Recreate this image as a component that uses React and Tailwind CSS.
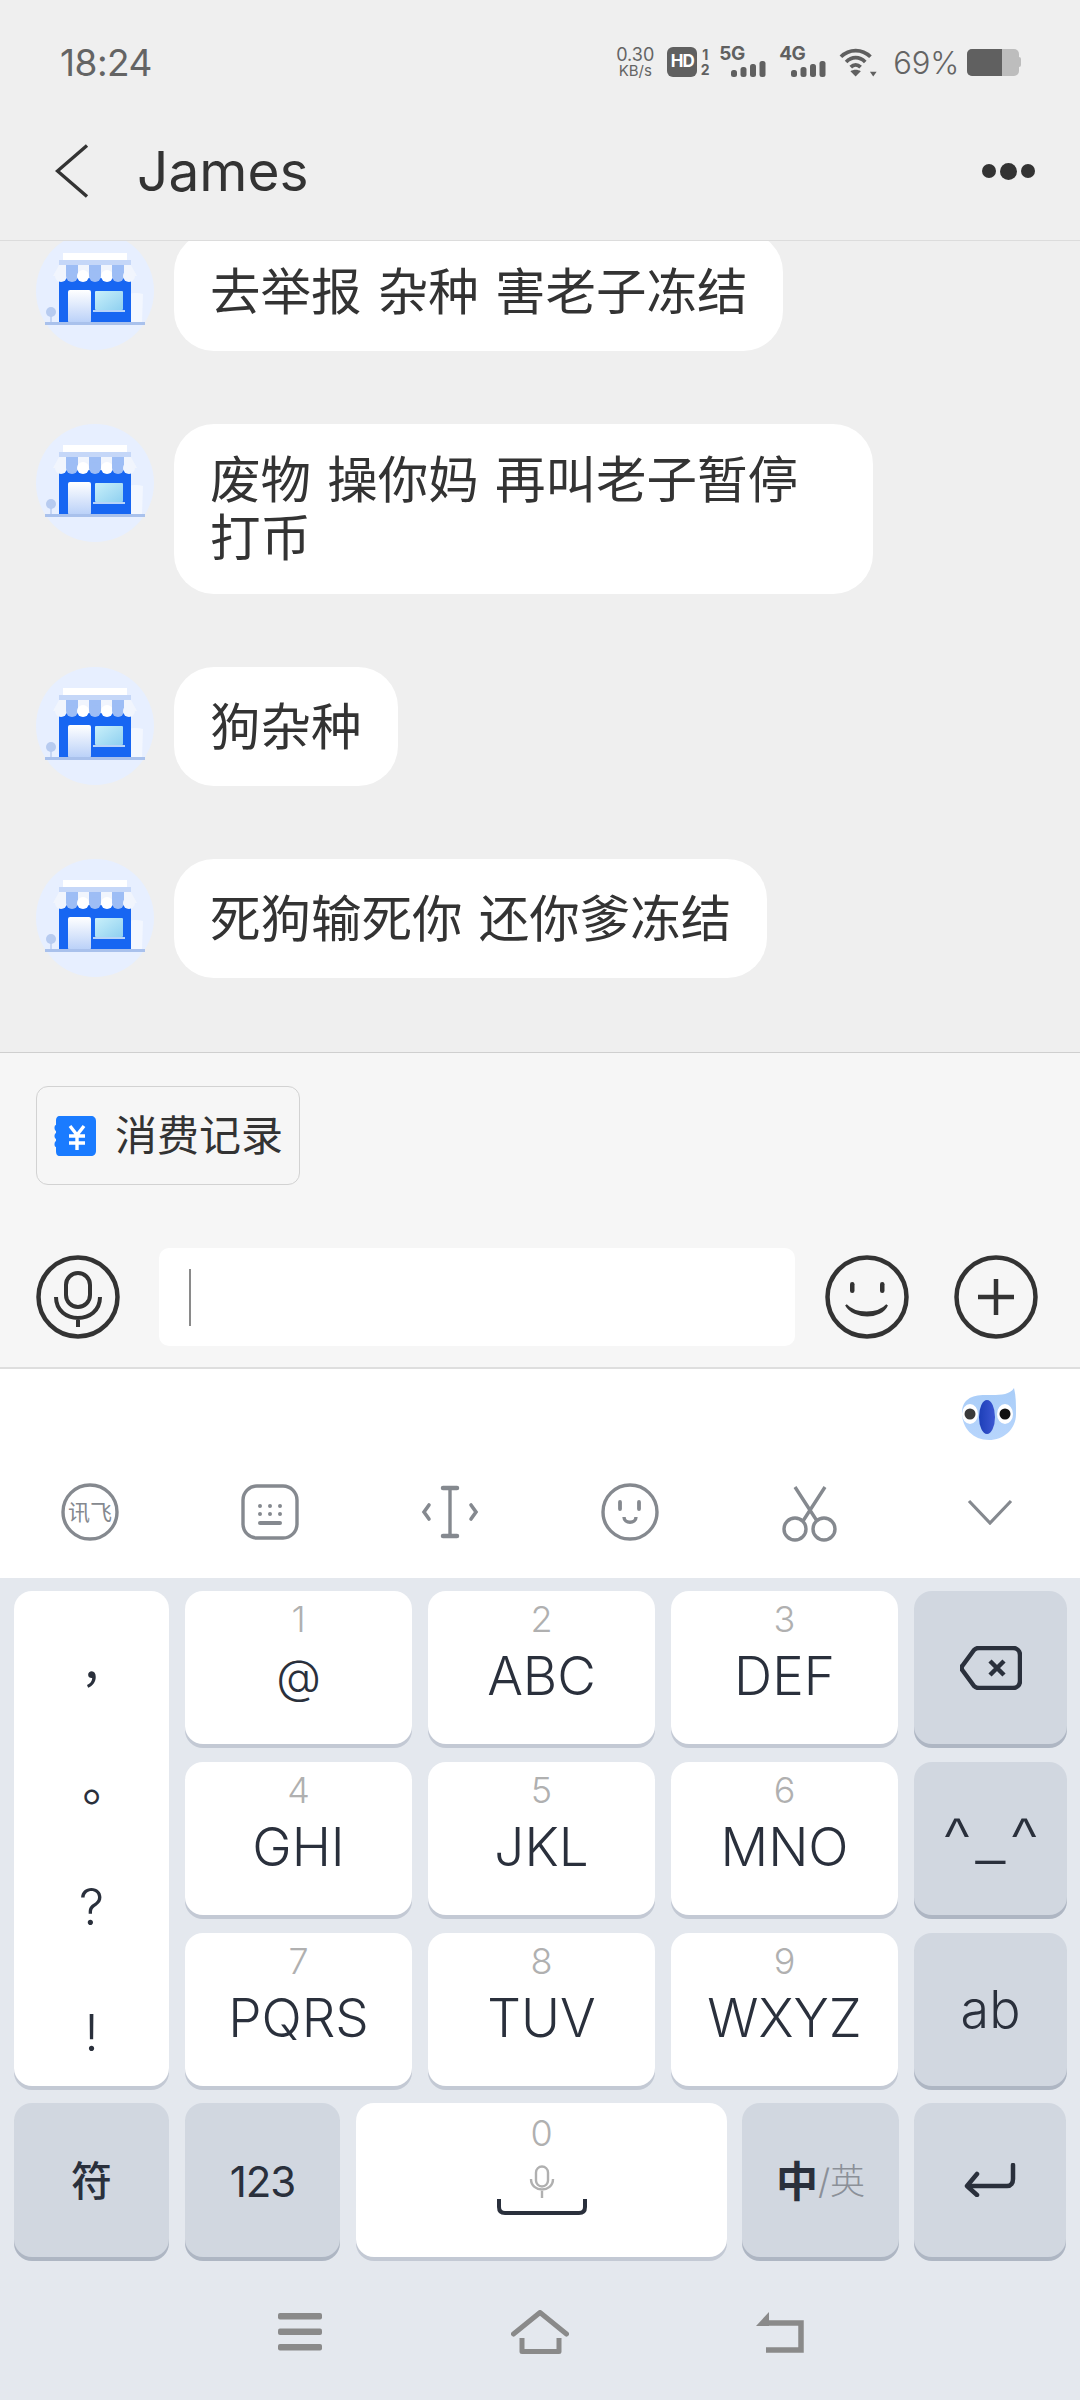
const cjk = `font-['Inter','Noto_Sans_CJK_SC',sans-serif]`;

function Bars() {
  return (
    <svg width="35" height="16" viewBox="0 0 35 16" fill="#606060">
      <rect x="0" y="9" width="6" height="7" rx="2.5" />
      <rect x="9.5" y="6" width="6" height="10" rx="2.5" />
      <rect x="19" y="3" width="6" height="13" rx="2.5" />
      <rect x="28.5" y="0" width="6" height="16" rx="2.5" />
    </svg>
  );
}

function Network({ label }) {
  return (
    <div className="relative w-[47px] h-[30px]">
      <span className="absolute left-0 top-[-3px] text-[19px] leading-[20px] font-bold text-[#606060] tracking-[-0.5px]">
        {label}
      </span>
      <div className="absolute left-[12px] bottom-0">
        <Bars />
      </div>
    </div>
  );
}

function StatusBar() {
  return (
    <div className="h-[102px] pt-[22px] pl-[60px] pr-[59px] flex items-center justify-between text-[#646464]">
      <span className="text-[37px] leading-none tracking-[-0.5px]">18:24</span>
      <div className="flex items-center">
        <div className="w-[38px] flex flex-col items-center leading-none">
          <span className="text-[18px] leading-[18px]">0.30</span>
          <span className="text-[15px] leading-[14px]">KB/s</span>
        </div>
        <div className="ml-[13px] w-[30px] h-[30px] rounded-[6px] bg-[#606060] flex items-center justify-center text-white text-[17px] font-bold tracking-[-1px]">
          HD
        </div>
        <div className="ml-[2px] w-[12px] flex flex-col items-center text-[#606060] text-[14px] font-bold leading-[15px]">
          <span>1</span>
          <span>2</span>
        </div>
        <div className="ml-[8px]">
          <Network label="5G" />
        </div>
        <div className="ml-[13px]">
          <Network label="4G" />
        </div>
        <svg className="ml-[13px]" width="38" height="29" viewBox="0 0 36 28" fill="none" stroke="#606060" strokeWidth="3.6">
          <path d="M1.5 8.5C9.5 0.5 22 0.5 30 8.5" />
          <path d="M6.5 13.5C12 8 19.5 8 25 13.5" />
          <path d="M11 18.5C14 15.5 17.5 15.5 20.5 18.5" />
          <path d="M15.7 27.5L10.7 22.5C13.5 20.5 18 20.5 20.7 22.5Z" fill="#606060" stroke="none" />
          <path d="M29.5 23H36L32.7 27.5Z" fill="#606060" stroke="none" />
        </svg>
        <span className="ml-[16px] text-[31px] leading-none font-light tracking-[-0.2px]">69%</span>
        <div className="ml-[8px] flex items-center">
          <div className="w-[52px] h-[27px] rounded-[5px] bg-[#bdbdbd] overflow-hidden">
            <div className="w-[35px] h-full bg-[#606060]" />
          </div>
          <div className="w-[2px] h-[10px] rounded-r-[2px] bg-[#bdbdbd]" />
        </div>
      </div>
    </div>
  );
}

function Header() {
  return (
    <div className="h-[139px] border-b border-[#dcdcdc] flex items-center pl-[55px] pr-[45px]">
      <svg width="34" height="54" viewBox="0 0 34 54" fill="none" stroke="#333333" strokeWidth="3.4">
        <path d="M32 1.5L2.5 27L32 52.5" />
      </svg>
      <span className="ml-[48px] text-[55px] leading-none text-[#333333] flex-1">James</span>
      <div className="flex items-center gap-[4px]">
        <div className="w-[14px] h-[14px] rounded-full bg-[#333333]" />
        <div className="w-[17px] h-[17px] rounded-full bg-[#333333]" />
        <div className="w-[14px] h-[14px] rounded-full bg-[#333333]" />
      </div>
    </div>
  );
}

function ShopAvatar({ id }) {
  return (
    <svg className="shrink-0" width="118" height="118" viewBox="0 0 118 118">
      <defs>
        <linearGradient id={`${id}d`} x1="0" y1="0" x2="0" y2="1">
          <stop offset="0" stopColor="#ffffff" />
          <stop offset="1" stopColor="#b9d0f8" />
        </linearGradient>
        <linearGradient id={`${id}w`} x1="0" y1="0" x2="1" y2="1">
          <stop offset="0" stopColor="#c9f0fa" />
          <stop offset="1" stopColor="#8fd0f0" />
        </linearGradient>
      </defs>
      <circle cx="59" cy="59" r="59" fill="#e7efff" />
      <path d="M85 90V68C92 60 100 60 107 62L106 90Z" fill="#f3f7ff" />
      <rect x="27" y="21" width="64" height="7" fill="#ffffff" />
      <rect x="23" y="28" width="72" height="5" fill="#c5d7f8" />
      <rect x="23" y="46" width="72" height="45" fill="#1766f2" />
      <rect x="32" y="58" width="23" height="33" rx="2" fill={`url(#${id}d)`} />
      <rect x="59" y="59" width="28" height="19" rx="1" fill={`url(#${id}w)`} />
      <rect x="57" y="78" width="32" height="2" fill="#b7d4f8" />
      <path d="M17 44L23 33H95L101 44Z" fill="#f1f5fd" />
      <circle cx="25" cy="44" r="6" fill="#f1f5fd" />
      <path d="M30 33H42V44H30Z" fill="#9dbdf5" />
      <circle cx="36" cy="44" r="6" fill="#9dbdf5" />
      <circle cx="47" cy="44" r="6" fill="#ffffff" />
      <path d="M53 33H65V44H53Z" fill="#9dbdf5" />
      <circle cx="59" cy="44" r="6" fill="#9dbdf5" />
      <circle cx="71" cy="44" r="6" fill="#ffffff" />
      <path d="M76 33H88V44H76Z" fill="#9dbdf5" />
      <circle cx="82" cy="44" r="6" fill="#9dbdf5" />
      <circle cx="93" cy="44" r="6" fill="#f1f5fd" />
      <circle cx="15" cy="80" r="5" fill="#b7cbf0" />
      <rect x="14.3" y="82" width="1.4" height="9" fill="#b7cbf0" />
      <rect x="9" y="90" width="100" height="3" fill="#a9c1ec" />
    </svg>
  );
}

function Message({ id, text }) {
  return (
    <div className="flex items-start pl-[36px] shrink-0">
      <ShopAvatar id={id} />
      <div className="ml-[20px] max-w-[699px] min-h-[119px] py-[27px] px-[36px] flex items-center bg-white rounded-[40px] text-[#333333] text-[50.5px] leading-[58px] [word-spacing:2px]">
        <span>{text}</span>
      </div>
    </div>
  );
}

function ChatList() {
  return (
    <div className="h-[811px] overflow-hidden">
      <div className="-mt-[9px] flex flex-col gap-[73px]">
        <Message id="a" text="去举报 杂种 害老子冻结" />
        <Message id="b" text="废物 操你妈 再叫老子暂停打币" />
        <Message id="c" text="狗杂种" />
        <Message id="e" text="死狗输死你 还你爹冻结" />
      </div>
    </div>
  );
}

function CircleIcon({ children }) {
  return (
    <svg className="shrink-0" width="84" height="84" viewBox="0 0 84 84" fill="none" stroke="#333333" strokeWidth="4.5">
      <circle cx="42" cy="42" r="39.5" />
      {children}
    </svg>
  );
}

function InputPanel() {
  return (
    <div className="h-[317px] border-t border-t-[#cfcfcf] border-b-2 border-b-[#dedede] bg-[#f6f6f6] pt-[33px] px-[36px] flex flex-col">
      <div className="w-[264px] h-[99px] rounded-[12px] border border-[#d2d2d2] flex items-center pl-[17px]">
        <svg width="42" height="40" viewBox="0 0 42 40">
          <path d="M6 0H37C40 0 42 2 42 5V35C42 38 40 40 37 40H6C3 40 2 38 2 35V31C0 31 0 26 2 25V23C0 22 0 18 2 17V15C0 14 0 9 2 9V5C2 2 3 0 6 0Z" fill="#1a7bff" />
          <path d="M16 10L23 19L30 10M15 20H31M15 27H31M23 19V34" fill="none" stroke="#ffffff" strokeWidth="3.4" />
        </svg>
        <span className="ml-[19px] text-[42px] leading-none text-[#333333]">消费记录</span>
      </div>
      <div className="mt-[63px] flex items-center">
        <CircleIcon>
          <rect x="30" y="18" width="24" height="34" rx="12" strokeWidth="4" />
          <path d="M20 42C20 70 64 70 64 42M42 62V72" strokeWidth="4" />
        </CircleIcon>
        <div className="ml-[39px] w-[636px] h-[98px] rounded-[10px] bg-white pl-[30px] flex items-center">
          <div className="w-[2px] h-[57px] bg-[#8a8a8a]" />
        </div>
        <div className="ml-[30px]">
          <CircleIcon>
            <rect x="25" y="27" width="4.5" height="11" rx="2.2" fill="#333333" stroke="none" />
            <rect x="55" y="27" width="4.5" height="11" rx="2.2" fill="#333333" stroke="none" />
            <path d="M21 50C30 60 53 60 62 50C56 64 29 64 21 50Z" fill="#333333" strokeWidth="2" />
          </CircleIcon>
        </div>
        <div className="ml-[45px]">
          <CircleIcon>
            <path d="M24 42H60M42 24V60" strokeWidth="4.5" />
          </CircleIcon>
        </div>
      </div>
    </div>
  );
}

function Toolbar() {
  const toolClass = "flex items-center justify-center";
  return (
    <div className="h-[209px] bg-white relative">
      {/* 輸入法吉祥物 */}
      <svg className="absolute left-[961px] top-[19px]" width="55" height="53" viewBox="0 0 55 53">
        <defs>
          <linearGradient id="blob" x1="0" y1="0" x2="0" y2="1">
            <stop offset="0" stopColor="#a9cdf8" />
            <stop offset="1" stopColor="#b7d5fc" />
          </linearGradient>
          <linearGradient id="nose" x1="0" y1="0" x2="1" y2="0">
            <stop offset="0" stopColor="#1d3fb8" />
            <stop offset="1" stopColor="#3c57d2" />
          </linearGradient>
        </defs>
        <path d="M1 25C1 12 10 7 24 7C36 7 48 8 53 0C55 8 55 16 55 26C55 42 42 52 28 52C12 52 1 40 1 25Z" fill="url(#blob)" />
        <ellipse cx="9" cy="26" rx="8" ry="10" fill="#ffffff" />
        <ellipse cx="44" cy="26" rx="8" ry="10" fill="#ffffff" />
        <circle cx="9" cy="26" r="5.5" fill="#3a3a3a" />
        <circle cx="44" cy="26" r="5.5" fill="#111111" />
        <ellipse cx="26" cy="29" rx="8" ry="17" fill="url(#nose)" />
      </svg>
      <div className="absolute left-0 right-0 bottom-[36px] grid grid-cols-6">
        <div className={toolClass}>
          <svg width="60" height="60" viewBox="0 0 60 60" fill="none" stroke="#85898f" strokeWidth="3.4">
            <circle cx="30" cy="30" r="27" />
            <text x="30" y="38" textAnchor="middle" fontSize="22" fill="#85898f" stroke="none" fontFamily="Noto Sans CJK SC, sans-serif">讯飞</text>
          </svg>
        </div>
        <div className={toolClass}>
          <svg width="60" height="60" viewBox="0 0 60 60" fill="none" stroke="#85898f" strokeWidth="3.4">
            <rect x="3" y="4" width="54" height="52" rx="14" />
            <path d="M20 24V24.1M30 24V24.1M40 24V24.1M20 32V32.1M30 32V32.1M40 32V32.1" strokeWidth="4" strokeLinecap="round" />
            <path d="M20 41H40" strokeWidth="4" strokeLinecap="round" />
          </svg>
        </div>
        <div className={toolClass}>
          <svg width="60" height="60" viewBox="0 0 60 60" fill="none" stroke="#85898f" strokeWidth="3.4">
            <path d="M23 6H37M23 54H37" strokeWidth="4.5" strokeLinecap="round" />
            <path d="M30 6V54" />
            <path d="M9 23L4 30L9 37M51 23L56 30L51 37" strokeWidth="3.6" strokeLinecap="round" />
          </svg>
        </div>
        <div className={toolClass}>
          <svg width="60" height="60" viewBox="0 0 60 60" fill="none" stroke="#85898f" strokeWidth="3.4">
            <circle cx="30" cy="30" r="27" />
            <path d="M20 20V27M39 20V27" strokeWidth="3.8" strokeLinecap="round" />
            <path d="M24 35C24 42 36 42 36 35" />
          </svg>
        </div>
        <div className={toolClass}>
          <svg width="60" height="60" viewBox="0 0 60 60" fill="none" stroke="#85898f" strokeWidth="3.4">
            <path d="M15 5L37 39M45 5L23 39" />
            <circle cx="15" cy="47" r="11" />
            <circle cx="44" cy="47" r="11" />
          </svg>
        </div>
        <div className={toolClass}>
          <svg width="46" height="26" viewBox="0 0 46 26" fill="none" stroke="#85898f" strokeWidth="3.2">
            <path d="M2 2L23 24L44 2" />
          </svg>
        </div>
      </div>
    </div>
  );
}

function LetterKey({ num, label, labelClass = "text-[53px]" }) {
  return (
    <div className="bg-white rounded-[18px] shadow-[0_4px_0_#c3c9d4] flex flex-col items-center pt-[10px]">
      <span className="h-[36px] text-[36px] leading-[36px] font-light text-[#b0b0b0]">{num}</span>
      <span className={`mt-[9px] h-[60px] leading-[60px] font-[350] text-[#2a303c] ${labelClass}`}>{label}</span>
    </div>
  );
}

function SideKey({ children, className = "" }) {
  return (
    <div className={`bg-[#d1d7e0] rounded-[18px] shadow-[0_4px_0_#aeb6c3] flex items-center justify-center text-[#2a303c] ${className}`}>
      {children}
    </div>
  );
}

function Keyboard() {
  return (
    <div className="pt-[13px] pl-[14px]">
      <div className="grid grid-cols-[155px_227px_227px_227px_153px] grid-rows-[153px_153px_153px] gap-x-[16px] gap-y-[18px]">
        <div className="row-span-3 bg-white rounded-[18px] shadow-[0_4px_0_#c3c9d4] grid grid-rows-4 text-[#2a303c]">
          <span className="flex items-center justify-center pt-[6px] text-[52px] leading-none font-['Noto_Sans_CJK_TC',sans-serif]">,</span>
          <span className="flex items-center justify-center pt-[34px] text-[48px] leading-none font-['Noto_Sans_CJK_TC',sans-serif]">。</span>
          <span className="flex items-center justify-center pt-[14px] text-[50px] leading-none font-[350]">?</span>
          <span className="flex items-center justify-center pt-[18px] text-[50px] leading-none font-[350]">!</span>
        </div>
        <LetterKey num="1" label="@" labelClass="text-[46px]" />
        <LetterKey num="2" label="ABC" />
        <LetterKey num="3" label="DEF" />
        <SideKey>
          <svg width="62" height="44" viewBox="0 0 62 44" fill="none" stroke="#2a303c" strokeWidth="4.5" strokeLinejoin="round">
            <path d="M19 2H53C57 2 60 5 60 9V35C60 39 57 42 53 42H19C17 42 15 41 14 40L3 25C1 23 1 21 3 19L14 4C15 3 17 2 19 2Z" />
            <path d="M30 15L44 29M44 15L30 29" strokeWidth="4.5" />
          </svg>
        </SideKey>
        <LetterKey num="4" label="GHI" />
        <LetterKey num="5" label="JKL" />
        <LetterKey num="6" label="MNO" />
        <SideKey className="pb-[6px]">
          <span className="text-[52px] tracking-[7px] pl-[7px] font-['Liberation_Sans',sans-serif]">^_^</span>
        </SideKey>
        <LetterKey num="7" label="PQRS" />
        <LetterKey num="8" label="TUV" />
        <LetterKey num="9" label="WXYZ" />
        <SideKey className="text-[52px] font-[350]">ab</SideKey>
      </div>
      <div className="mt-[17px] flex h-[154px]">
        <SideKey className="w-[155px] pt-[3px] text-[41px] font-medium">符</SideKey>
        <SideKey className="ml-[16px] w-[155px] pt-[3px] text-[42px] tracking-[-1px]">123</SideKey>
        <div className="ml-[16px] w-[371px] bg-white rounded-[18px] shadow-[0_4px_0_#c3c9d4] flex flex-col items-center pt-[12px]">
          <span className="h-[36px] text-[36px] leading-[36px] font-light text-[#b0b0b0]">0</span>
          <svg className="mt-[14px]" width="26" height="33" viewBox="0 0 26 33" fill="none" stroke="#b0b0b0" strokeWidth="2.4">
            <rect x="7" y="1.5" width="12" height="20" rx="6" />
            <path d="M2 14C2 28 24 28 24 14M13 26V33" />
          </svg>
          <svg className="mt-[1px]" width="90" height="16" viewBox="0 0 90 16" fill="none" stroke="#2a303c" strokeWidth="4">
            <path d="M2 0V8C2 12 4 14 8 14H82C86 14 88 12 88 8V0" />
          </svg>
        </div>
        <SideKey className="ml-[15px] w-[157px] pt-[3px] items-baseline">
          <span className="text-[42px] font-semibold">中</span>
          <span className="text-[35px] font-light text-[#8b9098]">/英</span>
        </SideKey>
        <SideKey className="ml-[15px] w-[152px]">
          <svg width="52" height="34" viewBox="0 0 52 34" fill="none" stroke="#2a303c" strokeWidth="4.5" strokeLinecap="round" strokeLinejoin="round">
            <path d="M49 2V16C49 20 47 23 43 23H4" />
            <path d="M13 11L3 23L13 32" />
          </svg>
        </SideKey>
      </div>
    </div>
  );
}

function NavBar() {
  return (
    <div className="mt-[53px] grid grid-cols-3 w-[720px] mx-auto">
      <div className="flex items-center justify-center">
        <svg width="44" height="38" viewBox="0 0 44 38" fill="#8a8a8a">
          <rect x="0" y="0" width="44" height="6.5" rx="2" />
          <rect x="0" y="15.5" width="44" height="6.5" rx="2" />
          <rect x="0" y="31" width="44" height="6.5" rx="2" />
        </svg>
      </div>
      <div className="flex items-center justify-center">
        <svg width="58" height="44" viewBox="0 0 58 44" fill="none" stroke="#8a8a8a" strokeWidth="5" strokeLinejoin="round">
          <path d="M2.5 24L29 2.5L55.5 24" strokeLinecap="round" />
          <path d="M11 28V41.5H48V28" />
        </svg>
      </div>
      <div className="flex items-center justify-center">
        <svg width="48" height="44" viewBox="0 0 48 44" fill="none" stroke="#8a8a8a" strokeWidth="5.5">
          <path d="M8 13H45V40H10" />
          <path d="M0 16L13 2V16Z" fill="#8a8a8a" stroke="none" />
        </svg>
      </div>
    </div>
  );
}

export default function App() {
  return (
    <div className={`w-[1080px] h-[2400px] overflow-hidden bg-[#efefef] ${cjk}`}>
      <StatusBar />
      <Header />
      <ChatList />
      <InputPanel />
      <Toolbar />
      <div className="h-[822px] bg-[#e4e8ee]">
        <Keyboard />
        <NavBar />
      </div>
    </div>
  );
}
